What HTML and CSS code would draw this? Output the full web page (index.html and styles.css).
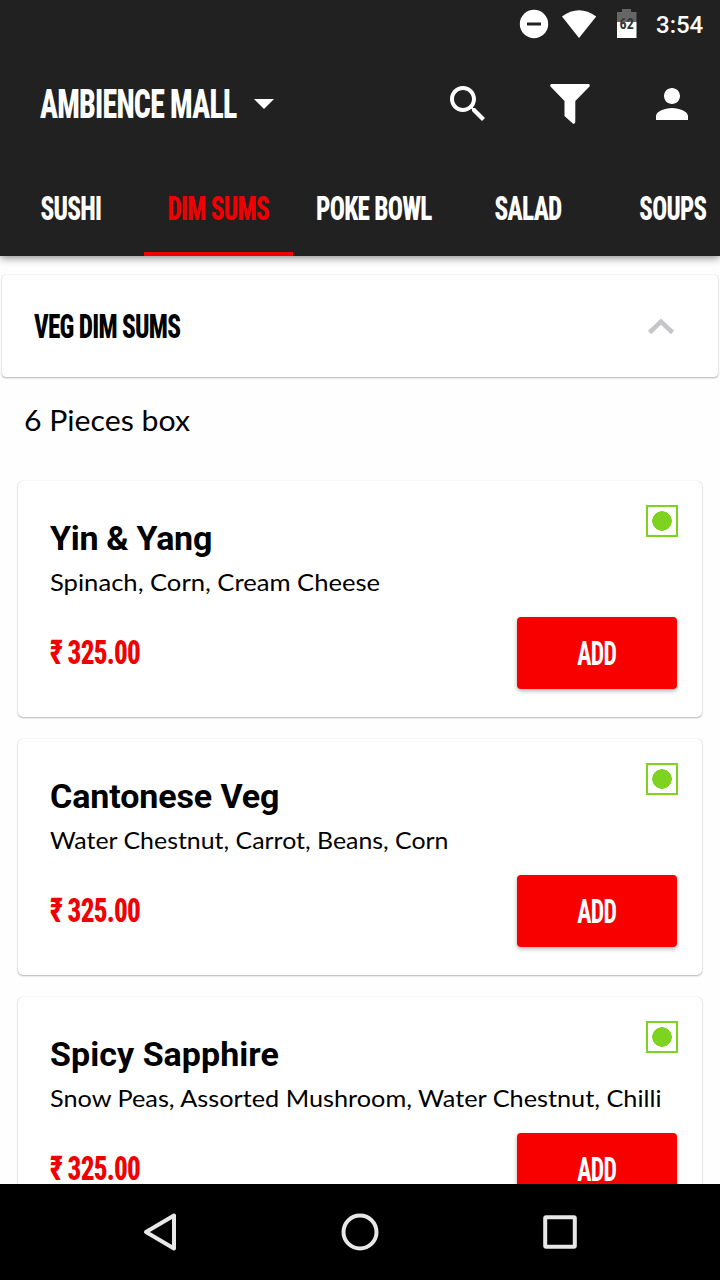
FILE: index.html
```
<!DOCTYPE html>
<html lang="en">
<head>
<meta charset="utf-8">
<title>Menu</title>
<link rel="stylesheet" href="styles.css">
</head>
<body>
<div class="screen">
  <header class="header">
    <div class="status">
      <svg class="status-icons" width="120" height="32" viewBox="0 0 120 32">
        <circle cx="16" cy="16" r="14.2" fill="#fff"/>
        <path d="M9 16h14" stroke="#212121" stroke-width="3"/>
        <path d="M44 8.500Q61 -4 78.200 8.500L61 30z" fill="#fff"/>
        <path d="M99 4h5V1h9v3h5.500v10H99z" fill="#666"/>
        <path d="M99 14h19.500v16H99z" fill="#fff"/>
        <text class="battery" x="108.700" y="21" text-anchor="middle">62</text>
      </svg>
      <span class="clock">3:54</span>
    </div>
    <div class="toolbar">
      <div class="outlet"><span class="display">AMBIENCE MALL</span></div>
      <svg width="20" height="10" viewBox="0 0 20 10"><path d="M0 0h20L10 10z" fill="#fff"/></svg>
      <div class="actions">
        <svg width="48" height="48" viewBox="0 0 24 24"><path fill="#fff" d="M15.500 14h-.79l-.28-.27C15.410 12.590 16 11.110 16 9.500 16 5.910 13.090 3 9.500 3S3 5.910 3 9.500 5.910 16 9.500 16c1.610 0 3.090-.59 4.230-1.570l.27.28v.79l5 4.990L20.490 19l-4.990-5zm-6 0C7.010 14 5 11.990 5 9.500S7.010 5 9.500 5 14 7.010 14 9.500 11.990 14 9.500 14z"/></svg>
        <svg width="48" height="48" viewBox="0 0 48 48"><path fill="#fff" d="M5 4h38q1.500 1 .5 2.500L29.300 21v20.500q0 3-2.500 2L18.500 36V21L4.500 6.500Q3.500 5 5 4z"/></svg>
        <svg width="48" height="48" viewBox="0 0 24 24"><path fill="#fff" d="M12 12c2.210 0 4-1.790 4-4s-1.790-4-4-4-4 1.790-4 4 1.790 4 4 4zm0 2c-2.670 0-8 1.340-8 4v2h16v-2c0-2.660-5.330-4-8-4z"/></svg>
      </div>
    </div>
    <nav class="tabs">
      <div class="tab"><span class="display">SUSHI</span></div>
      <div class="tab tab-active"><span class="display">DIM SUMS</span></div>
      <div class="tab tab-wide"><span class="display">POKE BOWL</span></div>
      <div class="tab"><span class="display">SALAD</span></div>
      <div class="tab tab-last"><span class="display">SOUPS</span></div>
    </nav>
  </header>

  <main class="content">
    <section class="group">
      <h2 class="display">VEG DIM SUMS</h2>
      <svg width="28" height="18" viewBox="0 0 28 18"><path d="M2.500 15.500L14 4.500l11.500 11" fill="none" stroke="#c6c6c9" stroke-width="4.500"/></svg>
    </section>
    <p class="note">6 Pieces box</p>

    <div class="list">
      <article class="card">
        <h3 class="name-tight">Yin &amp; Yang</h3>
        <p class="desc desc-short">Spinach, Corn, Cream Cheese</p>
        <div class="row"><span class="price display"><span class="rupee">₹</span>325.00</span><button class="add"><span class="display">ADD</span></button></div>
        <i class="veg"></i>
      </article>
      <article class="card">
        <h3>Cantonese Veg</h3>
        <p class="desc desc-medium">Water Chestnut, Carrot, Beans, Corn</p>
        <div class="row"><span class="price display"><span class="rupee">₹</span>325.00</span><button class="add"><span class="display">ADD</span></button></div>
        <i class="veg"></i>
      </article>
      <article class="card">
        <h3 class="name-loose">Spicy Sapphire</h3>
        <p class="desc">Snow Peas, Assorted Mushroom, Water Chestnut, Chilli</p>
        <div class="row"><span class="price display"><span class="rupee">₹</span>325.00</span><button class="add"><span class="display">ADD</span></button></div>
        <i class="veg"></i>
      </article>
    </div>
  </main>

  <footer class="navbar">
    <svg width="40" height="40" viewBox="0 0 40 40"><path d="M34 3.500v33L6 20z"/></svg>
    <svg width="40" height="40" viewBox="0 0 40 40"><circle cx="20" cy="20" r="16.500"/></svg>
    <svg width="40" height="40" viewBox="0 0 40 40"><rect x="5.200" y="5.200" width="29.600" height="29.600" rx="1"/></svg>
  </footer>
</div>
</body>
</html>
```
FILE: styles.css
```
* { box-sizing: border-box; margin: 0; padding: 0; }
body { background: #fefefe; color: #000; font-family: Roboto, sans-serif; }
svg { display: block; flex: none; }

.screen { width: 720px; height: 1280px; display: flex; flex-direction: column; overflow: hidden; }

.display {
  display: inline-block;
  font-family: "Roboto Condensed", Roboto, sans-serif;
  font-size: 34px;
  font-weight: 800;
  line-height: 40px;
  letter-spacing: -1px;
  white-space: nowrap;
  transform: scaleX(.743);
  transform-origin: center;
}

.header { flex: none; height: 256px; background: #212121; color: #fff; box-shadow: 0 2px 8px rgba(0, 0, 0, .45); z-index: 1; }

.status { height: 48px; display: flex; align-items: center; justify-content: flex-end; gap: 18px; padding-right: 16px; }
.battery { font: bold 14px "Roboto Condensed", Roboto, sans-serif; fill: #333; }
.clock { width: 48px; padding-top: 2px; font-size: 24px; font-weight: 500; line-height: 32px; white-space: nowrap; }

.toolbar { height: 112px; display: flex; align-items: center; padding: 0 24px 0 40px; }
.outlet { width: 214px; padding-top: 2px; }
.outlet .display { font-size: 40px; line-height: 48px; transform: scaleX(.745); transform-origin: left; }
.actions { margin-left: auto; display: flex; gap: 54px; }

.tabs { height: 96px; display: flex; }
.tab { flex: none; width: 144px; display: flex; align-items: center; justify-content: center; border-bottom: 4px solid transparent; padding: 3px 2px 0 0; }
.tab-active { width: 149px; padding-right: 1px; color: #f00000; border-color: #f00000; }
.tab-wide { width: 164px; }
.tab-last { width: 146px; }
.tab-last .display { transform: scaleX(.73); }

.content { flex: 1; min-height: 0; overflow: hidden; padding-top: 19px; }
.group { height: 102px; margin: 0 2px; padding: 0 43px 0 32px; display: flex; align-items: center; justify-content: space-between; background: #fff; border-radius: 4px; box-shadow: 0 1px 2px rgba(0, 0, 0, .28), 0 0 1px rgba(0, 0, 0, .25); }
.group .display { transform-origin: left; }
.note { margin: 26px 24px 0; font: 28px/34px Lato, sans-serif; transform: scaleX(1.08); transform-origin: left; }

.list { display: flex; flex-direction: column; gap: 22px; margin: 44px 18px 0; }
.card { position: relative; flex: none; height: 236px; padding: 37px 25px 0 32px; background: #fff; border-radius: 5px; box-shadow: 0 1px 2px rgba(0, 0, 0, .28), 0 0 1px rgba(0, 0, 0, .22); }
.card h3 { font-size: 34px; line-height: 40px; font-weight: 700; letter-spacing: -.1px; }
.card .name-tight { letter-spacing: -.3px; }
.card .name-loose { letter-spacing: .05px; }
.desc { margin-top: 9px; font: 24px/29px Lato, sans-serif; white-space: nowrap; transform: scaleX(1.053); transform-origin: left; }
.desc-short { transform: scaleX(1.067); }
.desc-medium { transform: scaleX(1.037); }
.row { margin-top: 21px; display: flex; align-items: center; justify-content: space-between; }
.price { margin-top: -2px; color: #f00000; transform: scaleX(.8); transform-origin: left; }
.rupee { display: inline-block; width: 22px; }
.add { width: 160px; height: 72px; border: 0; border-radius: 4px; background: #f80000; color: #fff; box-shadow: 0 2px 4px rgba(0, 0, 0, .3); }
.add .display { font-weight: 700; transform: scaleX(.7); }
.veg { position: absolute; top: 24px; right: 24px; width: 32px; height: 32px; border: 2px solid #7ed321; background: radial-gradient(circle, #7ed321 9.500px, transparent 10px); }

.navbar { flex: none; height: 96px; background: #000; display: flex; align-items: center; justify-content: center; gap: 160px; }
.navbar svg { fill: none; stroke: #e8e8e8; stroke-width: 4; stroke-linejoin: round; }
```
